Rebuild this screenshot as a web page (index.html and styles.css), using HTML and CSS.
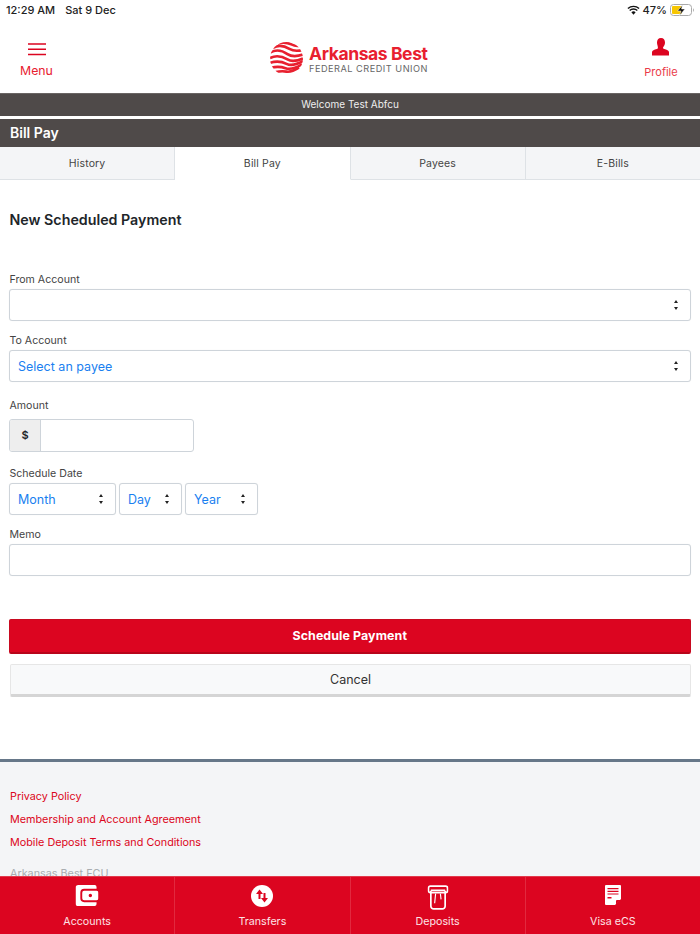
FILE: index.html
```html
<!DOCTYPE html>
<html lang="en">
<head>
<meta charset="utf-8">
<title>Bill Pay</title>
<link rel="stylesheet" href="styles.css">
</head>
<body>
<div class="status">
  <div class="status-left"><span>12:29 AM</span><span>Sat 9 Dec</span></div>
  <div class="status-right">
    <svg class="wifi" viewBox="0 0 14 10" width="13" height="10"><path d="M7 10 4.700 7.400a3.400 3.400 0 0 1 4.600 0z" fill="#111"/><path d="M2.900 5.600a5.800 5.800 0 0 1 8.200 0M1 3.500a8.600 8.600 0 0 1 12 0" fill="none" stroke="#111" stroke-width="1.500"/></svg>
    <span>47%</span>
    <svg class="battery" viewBox="0 0 25 12" width="25" height="12"><rect x=".5" y=".5" width="21" height="11" rx="3" fill="none" stroke="#aaa"/><rect x="2" y="2" width="10" height="8" rx="1" fill="#f7c600"/><path d="M23 4.200c1 .4 1 3.200 0 3.600z" fill="#999"/><path d="M12.500 1 7.500 7h3.500L9.500 11.500 15 5h-3.500z" fill="#111" stroke="#fff" stroke-width=".5"/></svg>
  </div>
</div>
<header class="top">
  <a class="menu">
    <svg viewBox="0 0 18 13" width="18" height="13"><path d="M0 1h18M0 6.300h18M0 11.600h18" stroke="#dc0520" stroke-width="1.500"/></svg>
    <span>Menu</span>
  </a>
  <div class="logo">
    <svg viewBox="0 0 34 34" width="33" height="33">
      <defs><clipPath id="globe"><circle cx="17" cy="17" r="17"/></clipPath></defs>
      <g clip-path="url(#globe)" fill="none" stroke="#e8202f" stroke-width="2.700">
        <path d="M8 1.500c5-1.500 10-1 14 1s7 2 10 1"/>
        <path d="M3 6c6-3.500 12-2 17 1s9 2.500 14 1"/>
        <path d="M0 11c6-3.500 13-2 18 1.500s10 2.500 16 .5"/>
        <path d="M0 16.500c6-3 13-1.500 18 1.500s10 1.500 16-1"/>
        <path d="M0 21.500c6-2 12-1.500 17 1s11 .5 17-3"/>
        <path d="M1 26.500c6-1.500 11-1 15 .5s11-.5 17-4"/>
        <path d="M6 31c4-1 8-1 11-.5s8-1 13-4"/>
      </g>
    </svg>
    <div class="logo-text">
      <div class="logo-name">Arkansas Best</div>
      <div class="logo-sub">FEDERAL CREDIT UNION</div>
    </div>
  </div>
  <a class="profile">
    <svg viewBox="0 0 18 18" width="18" height="18"><path d="M9 0c2.700 0 4 2 4 4.500 0 2-1 3.700-1.800 4.700-.5.700 0 1.500 1 1.900 2.500.8 4.800 1.500 4.800 3.200V17.500H0v-3.200c0-1.700 2.300-2.400 4.800-3.200 1-.4 1.500-1.200 1-1.900C6 8.200 5 6.500 5 4.500 5 2 6.300 0 9 0z" fill="#dc0520"/></svg>
    <span>Profile</span>
  </a>
</header>
<div class="welcome">Welcome Test Abfcu</div>
<h1 class="page-title">Bill Pay</h1>
<nav class="tabs">
  <a class="tab">History</a>
  <a class="tab active">Bill Pay</a>
  <a class="tab">Payees</a>
  <a class="tab">E-Bills</a>
</nav>
<main class="content">
  <h2 class="form-title">New Scheduled Payment</h2>
  <label class="lbl lbl-from">From Account</label>
  <div class="sel full"><span></span><i class="updown"></i></div>
  <label class="lbl lbl-to">To Account</label>
  <div class="sel full"><span class="blue">Select an payee</span><i class="updown"></i></div>
  <label class="lbl lbl-amount">Amount</label>
  <div class="amount"><span class="dollar">$</span><span class="amount-input"></span></div>
  <label class="lbl lbl-date">Schedule Date</label>
  <div class="date-row">
    <div class="sel month"><span class="blue">Month</span><i class="updown"></i></div>
    <div class="sel day"><span class="blue">Day</span><i class="updown"></i></div>
    <div class="sel year"><span class="blue">Year</span><i class="updown"></i></div>
  </div>
  <label class="lbl lbl-memo">Memo</label>
  <div class="sel full"></div>
  <button class="btn-primary">Schedule Payment</button>
  <button class="btn-cancel">Cancel</button>
</main>
<footer class="foot">
  <a>Privacy Policy</a>
  <a>Membership and Account Agreement</a>
  <a>Mobile Deposit Terms and Conditions</a>
  <p>Arkansas Best FCU</p>
</footer>
<nav class="bottom">
  <a class="bt">
    <svg viewBox="0 0 24 22" width="23" height="21"><path fill-rule="evenodd" d="M3 0h17a2 2 0 0 1 2 2v2H9a4 4 0 0 0-4 4v6a4 4 0 0 0 4 4h13v2a2 2 0 0 1-2 2H3a3 3 0 0 1-3-3V3a3 3 0 0 1 3-3zm6 6h13a2 2 0 0 1 2 2v6a2 2 0 0 1-2 2H9a2 2 0 0 1-2-2V8a2 2 0 0 1 2-2zm6.500 3.200a1.800 1.800 0 1 0 0 3.600 1.800 1.800 0 0 0 0-3.600z" fill="#fff"/></svg>
    <span>Accounts</span>
  </a>
  <a class="bt">
    <svg viewBox="0 0 22 22" width="22" height="22"><circle cx="11" cy="11" r="11" fill="#fff"/><path d="M8.500 4.500 5 9h2.500v5h2V9H12zM13.500 17.500 17 13h-2.500V8h-2v5H10z" fill="#dc0520"/></svg>
    <span>Transfers</span>
  </a>
  <a class="bt">
    <svg viewBox="0 0 22 26" width="21" height="25" fill="none" stroke="#fff"><rect x="1" y="1" width="20" height="7" rx="2" stroke-width="1.800"/><path d="M3.500 5.500h15" stroke-width="1.800"/><path d="M3.500 6v16a3 3 0 0 0 3 3h9a3 3 0 0 0 3-3V6" stroke-width="1.800"/><path d="M8.500 9 7.500 19M13.500 9l.7 6" stroke-width="1.200"/></svg>
    <span>Deposits</span>
  </a>
  <a class="bt">
    <svg viewBox="0 0 16 20" width="16" height="20"><path fill-rule="evenodd" d="M1 0h14a1 1 0 0 1 1 1v13l-6 6H1a1 1 0 0 1-1-1V1a1 1 0 0 1 1-1zm1.500 3v1.200h11V3zm0 2.700v1.200h11V5.700zm0 2.700v1.200h11V8.400zm0 3.600v1.600h4V12zM11 19l4-4h-3a1 1 0 0 0-1 1z" fill="#fff"/></svg>
    <span>Visa eCS</span>
  </a>
</nav>
</body>
</html>
```

FILE: styles.css
```css
* { box-sizing: border-box; }
html, body { margin: 0; padding: 0; }
body {
  width: 700px;
  height: 934px;
  overflow: hidden;
  background: #fff;
  font-family: Inter, "Noto Sans", "Liberation Sans", sans-serif;
  color: #212529;
  position: relative;
}
a { display: block; }

.status {
  height: 19px;
  display: flex;
  justify-content: space-between;
  align-items: center;
  padding: 0 5px 0 6px;
  font-size: 11px;
  font-weight: 500;
  color: #222;
}
.status-left { display: flex; gap: 10px; }
.status-right { display: flex; align-items: center; gap: 3px; }

.top {
  height: 74px;
  display: flex;
  justify-content: space-between;
}
.menu {
  width: 73px;
  display: flex;
  flex-direction: column;
  align-items: center;
  padding-top: 24px;
  gap: 7px;
  color: #e8202f;
  font-size: 12.300px;
  line-height: 15px;
}
.profile {
  width: 78px;
  display: flex;
  flex-direction: column;
  align-items: center;
  padding-top: 19px;
  gap: 9px;
  color: #ea3a48;
  font-size: 11px;
  line-height: 14px;
}
.logo {
  display: flex;
  align-items: center;
  gap: 6px;
  margin-top: 22px;
  height: 35px;
  margin-left: 3px;
}
.logo-text { display: flex; flex-direction: column; }
.logo-name { color: #e8202f; font-size: 17.500px; line-height: 19px; font-weight: 700; letter-spacing: -.4px; }
.logo-sub { color: #666; font-size: 9.200px; line-height: 11px; letter-spacing: .5px; font-weight: 400; }

.welcome {
  height: 23px;
  background: #4f4a49;
  border-top: 1px solid #6a6564;
  color: #eee;
  font-size: 10px;
  line-height: 21px;
  text-align: center;
}
.page-title {
  margin: 3px 0 0;
  height: 28px;
  background: #4f4a49;
  color: #fff;
  font-size: 14px;
  font-weight: 600;
  line-height: 27px;
  padding-left: 10px;
}
.tabs {
  display: flex;
  height: 33px;
}
.tab {
  flex: 1;
  background: #f4f5f7;
  border-bottom: 1px solid #dee2e6;
  border-right: 1px solid #dee2e6;
  color: #444;
  font-size: 10.500px;
  line-height: 33px;
  text-align: center;
  letter-spacing: .15px;
}
.tab:last-child { border-right: 0; }
.tab.active { background: #fff; border-bottom-color: #fff; }

.content { padding: 0 9.500px 0 9px; display: flow-root; }
.form-title { margin: 31px 0 0 .5px; font-size: 14.250px; font-weight: 600; line-height: 18px; color: #212529; }
.lbl { display: block; font-size: 10.600px; line-height: 13px; color: #444; margin-left: .5px; }
.lbl-from { margin-top: 44px; margin-bottom: 3px; }
.lbl-to { margin-top: 13px; margin-bottom: 3px; }
.lbl-amount { margin-top: 17px; margin-bottom: 7px; }
.lbl-date { margin-top: 15px; margin-bottom: 3px; }
.lbl-memo { margin-top: 13px; margin-bottom: 3px; }

.sel {
  height: 32px;
  border: 1px solid #ced4da;
  border-radius: 3px;
  background: #fff;
  display: flex;
  align-items: center;
  justify-content: space-between;
  padding: 0 11px 0 8px;
  font-size: 12.500px;
  box-shadow: 0 0 1px rgba(0,0,0,.08);
}
.blue { color: #1a7ff0; }
.updown { position: relative; width: 5px; height: 10px; flex: none; }
.updown::before, .updown::after {
  content: "";
  position: absolute;
  left: 0;
  border-left: 2.500px solid transparent;
  border-right: 2.500px solid transparent;
}
.updown::before { top: 0; border-bottom: 3.500px solid #222; }
.updown::after { bottom: 0; border-top: 3.500px solid #222; }

.amount { display: flex; width: 185px; height: 33px; border: 1px solid #ced4da; border-radius: 3px; overflow: hidden; }
.dollar { width: 31px; background: #eee; border-right: 1px solid #ced4da; text-align: center; font-size: 11px; font-weight: 600; line-height: 31px; }
.amount-input { flex: 1; }

.date-row { display: flex; gap: 3px; }
.month { width: 107px; }
.day { width: 63px; }
.year { width: 73px; }

.btn-primary {
  display: block;
  width: 100%;
  height: 35px;
  margin-top: 43px;
  border: 1px solid #c80a20;
  border-bottom: 2px solid #b8051a;
  border-radius: 2px;
  background: #dc0520;
  color: #fff;
  font: 700 12.400px/30px Inter, "Liberation Sans", sans-serif;
  letter-spacing: .1px;
}
.btn-cancel {
  display: block;
  width: 681px;
  height: 33px;
  margin: 10px 0 0 1px;
  border: 1px solid #e6e6e6;
  border-bottom: 3px solid #d5d5d5;
  border-radius: 2px;
  background: #f8f9fa;
  color: #333;
  font: 400 12.500px/28px Inter, "Liberation Sans", sans-serif;
}

.foot {
  margin-top: 62px;
  border-top: 3px solid #667789;
  background: #f4f5f7;
  height: 200px;
  padding: 28px 10px 0;
  font-size: 10.800px;
  color: #dc0520;
}
.foot a { line-height: 14px; margin-bottom: 9px; }
.foot p { margin: 17px 0 0; color: #a9adb1; line-height: 14px; }

.bottom {
  position: fixed;
  left: 0;
  right: 0;
  bottom: 0;
  height: 58px;
  display: flex;
  background: #dc0520;
  border-top: 1px solid #e23a4c;
}
.bt {
  flex: 1;
  position: relative;
  color: #fde3e6;
  font-size: 10.700px;
  text-align: center;
  border-right: 1px solid #e2293f;
  height: 57px;
}
.bt:last-child { border-right: 0; }
.bt svg { position: absolute; top: 8px; left: 50%; transform: translateX(-50%); }
.bt span { position: absolute; left: 0; right: 0; top: 38px; line-height: 13px; }
```
